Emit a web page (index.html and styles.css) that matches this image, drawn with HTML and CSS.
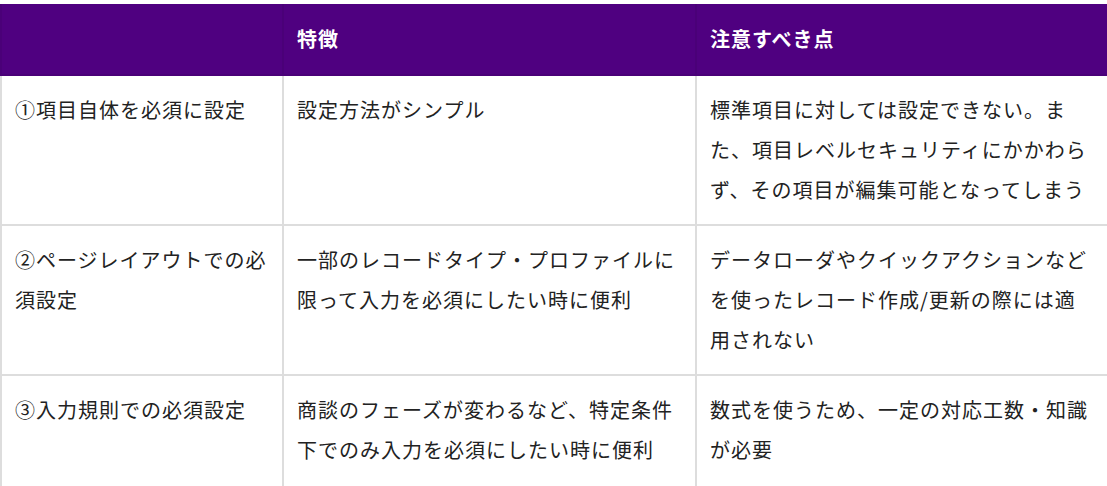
FILE: index.html
```html
<!DOCTYPE html>
<html lang="ja">
<head>
<meta charset="utf-8">
<link rel="stylesheet" href="styles.css">
</head>
<body>
<table class="cmp">
  <colgroup>
    <col class="c1">
    <col class="c2">
    <col class="c3">
  </colgroup>
  <thead>
    <tr>
      <th></th>
      <th>特徴</th>
      <th>注意すべき点</th>
    </tr>
  </thead>
  <tbody>
    <tr>
      <td>①項目自体を必須に設定</td>
      <td>設定方法がシンプル</td>
      <td>標準項目に対しては設定できない。また、項目レベルセキュリティにかかわらず、その項目が編集可能となってしまう</td>
    </tr>
    <tr>
      <td>②ページレイアウトでの必須設定</td>
      <td>一部のレコードタイプ・プロファイルに限って入力を必須にしたい時に便利</td>
      <td>データローダやクイックアクションなどを使ったレコード作成/更新の際には適用されない</td>
    </tr>
    <tr class="last">
      <td>③入力規則での必須設定</td>
      <td>商談のフェーズが変わるなど、特定条件下でのみ入力を必須にしたい時に便利</td>
      <td>数式を使うため、一定の対応工数・知識が必要</td>
    </tr>
  </tbody>
</table>
</body>
</html>
```

FILE: styles.css
```css
html, body {
  margin: 0;
  padding: 0;
  background: #ffffff;
}
body {
  padding-top: 4px;
  font-family: "Noto Sans CJK JP", "Noto Sans", sans-serif;
  color: #222222;
}
.cmp {
  width: 1107px;
  border-collapse: collapse;
  table-layout: fixed;
  font-size: 20px;
  letter-spacing: 1px;
  line-height: 40px;
}
.c1 { width: 282px; }
.c2 { width: 413px; }
.c3 { width: 412px; }
.cmp th {
  background: #4f0080;
  color: #ffffff;
  font-weight: 700;
  text-align: left;
  padding: 15px 13px;
  border: 2px solid #4a0078;
  border-top: none;
}
.cmp td {
  padding: 14px 13px;
  border: 2px solid #dddddd;
  vertical-align: top;
  word-break: break-all;
}
.cmp .last td {
  padding-bottom: 30px;
}
```
